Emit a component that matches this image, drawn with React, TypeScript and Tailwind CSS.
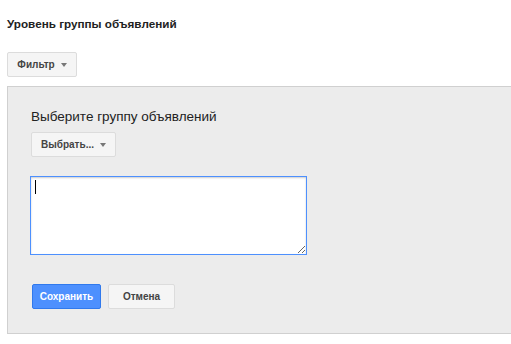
export default function App() {
  return (
    <div className="h-[344px] w-[511px] overflow-hidden bg-white font-['Liberation_Sans',Arial,sans-serif] text-[#222]">
      <div className="pl-[7px] pt-[17px]">
        <h1 className="text-[11.7px] font-bold leading-[14px]">Уровень группы объявлений</h1>

        <button className="mt-[21px] flex h-[25px] w-[70px] items-center justify-center gap-[6px] rounded-[2px] border border-[#dcdcdc] bg-[#f5f5f5] text-[10px] font-bold text-[#444]">
          Фильтр
          <span className="border-x-[3px] border-t-[4px] border-x-transparent border-t-[#777]" />
        </button>

        <div className="mt-[9px] h-[248px] w-[520px] border border-r-0 border-[#d0d0d0] bg-[#ececec] pl-[23px] pt-[21px]">
          <div className="text-[13.5px] leading-[17px] text-[#222]">Выберите группу объявлений</div>

          <button className="mt-[7px] flex h-[25px] w-[85px] items-center justify-center gap-[6px] rounded-[2px] border border-[#dcdcdc] bg-[#f5f5f5] text-[10px] font-bold text-[#444]">
            Выбрать...
            <span className="border-x-[3px] border-t-[4px] border-x-transparent border-t-[#777]" />
          </button>

          <div className="relative mt-[19px] -ml-px w-[277px]">
            <textarea className="block h-[79px] w-[277px] resize-y border border-[#4d90fe] bg-white shadow-[inset_0_1px_2px_rgba(0,0,0,0.2)] outline-none" />
            <span className="absolute left-[5px] top-[4px] h-[14px] w-px bg-black" />
          </div>

          <div className="mt-[29px] flex gap-[7px] pl-px">
            <button className="h-[25px] w-[69px] rounded-[2px] border border-[#3079ed] bg-[#4d90fe] text-[10px] font-bold text-white">
              Сохранить
            </button>
            <button className="h-[25px] w-[67px] rounded-[2px] border border-[#dcdcdc] bg-[#f5f5f5] text-[10px] font-bold text-[#444]">
              Отмена
            </button>
          </div>
        </div>
      </div>
    </div>
  );
}
